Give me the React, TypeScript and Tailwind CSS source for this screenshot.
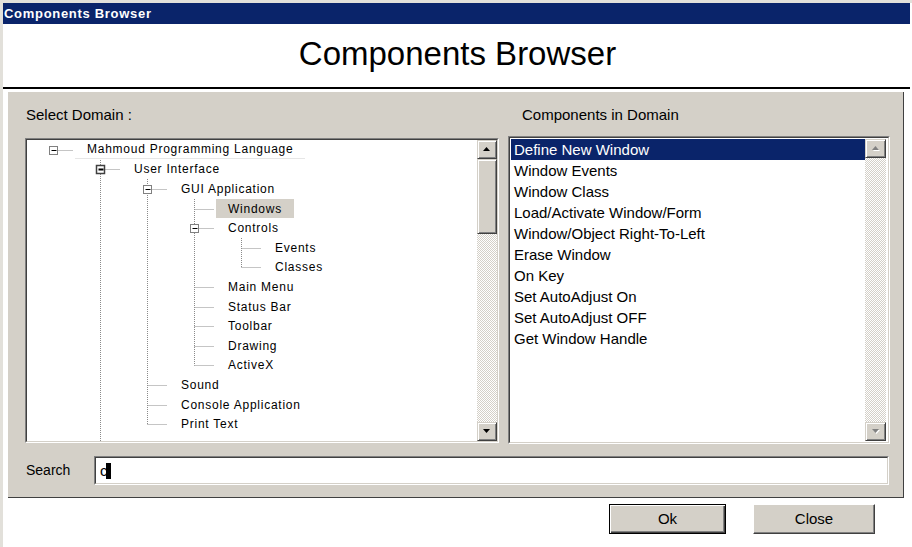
import React from 'react';

const treeRows = [
  { label: 'Mahmoud Programming Language', level: 0, box: true, underline: true },
  { label: 'User Interface', level: 1, box: true, strong: true },
  { label: 'GUI Application', level: 2, box: true },
  { label: 'Windows', level: 3, selected: true },
  { label: 'Controls', level: 3, box: true },
  { label: 'Events', level: 4 },
  { label: 'Classes', level: 4 },
  { label: 'Main Menu', level: 3 },
  { label: 'Status Bar', level: 3 },
  { label: 'Toolbar', level: 3 },
  { label: 'Drawing', level: 3 },
  { label: 'ActiveX', level: 3 },
  { label: 'Sound', level: 2 },
  { label: 'Console Application', level: 2 },
  { label: 'Print Text', level: 2 },
];

const components = [
  'Define New Window',
  'Window Events',
  'Window Class',
  'Load/Activate Window/Form',
  'Window/Object Right-To-Left',
  'Erase Window',
  'On Key',
  'Set AutoAdjust On',
  'Set AutoAdjust OFF',
  'Get Window Handle',
];

const indent: Record<number, string> = {
  0: 'ml-[48px]',
  1: 'ml-[95px]',
  2: 'ml-[142px]',
  3: 'ml-[189px]',
  4: 'ml-[236px]',
};

const ROW = 19.6;
const lineX = (level: number) => 26.5 + 47 * level;
const rowMid = (i: number) => Math.round(ROW * i + ROW / 2) + 0.5;

// vertical connectors: [level, first row, last row, runs to bottom]
const verticals: [number, number, number, boolean][] = [
  [1, 1, 14, true],
  [2, 2, 14, false],
  [3, 3, 11, false],
  [4, 5, 6, false],
];

function Arrow({ dir, disabled }: { dir: 'up' | 'down'; disabled?: boolean }) {
  const d = dir === 'up' ? 'M3.5 0L7 4H0z' : 'M0 0h7L3.5 4z';
  return (
    <svg width="8" height="5" viewBox="0 0 8 5">
      {disabled && <path d={d} fill="#ffffff" transform="translate(1 1)" />}
      <path d={d} fill={disabled ? '#808080' : '#000000'} />
    </svg>
  );
}

function ScrollBtn({ dir, disabled }: { dir: 'up' | 'down'; disabled?: boolean }) {
  return (
    <div className="h-[19px] shrink-0 bg-[#d4d0c8] border border-t-[#d4d0c8] border-l-[#d4d0c8] border-b-[#404040] border-r-[#404040] shadow-[inset_1px_1px_0_#ffffff,inset_-1px_-1px_0_#808080] flex items-center justify-center">
      <Arrow dir={dir} disabled={disabled} />
    </div>
  );
}

function TreeLines() {
  return (
    <svg className="absolute inset-0 pointer-events-none" width="450" height="301">
      <g stroke="#8a8a8a" strokeWidth="1" strokeDasharray="1 1" fill="none">
        {verticals.map(([lvl, from, to, open]) => (
          <line
            key={lvl}
            x1={lineX(lvl)}
            x2={lineX(lvl)}
            y1={Math.round(ROW * from)}
            y2={open ? 301 : rowMid(to)}
          />
        ))}
        {treeRows.map((r, i) => (
          <line key={i} x1={lineX(r.level)} x2={lineX(r.level) + 20} y1={rowMid(i)} y2={rowMid(i)} />
        ))}
      </g>
      {treeRows.map((r, i) =>
        r.box ? (
          <g key={i}>
            <rect
              x={lineX(r.level) - 4}
              y={rowMid(i) - 4}
              width="8"
              height="8"
              fill="#ffffff"
              stroke={r.strong ? '#404040' : '#808080'}
              strokeWidth={r.strong ? 1.5 : 1}
            />
            <line
              x1={lineX(r.level) - 2}
              x2={lineX(r.level) + 3}
              y1={rowMid(i)}
              y2={rowMid(i)}
              stroke="#000000"
              strokeWidth={r.strong ? 2 : 1}
            />
          </g>
        ) : null
      )}
    </svg>
  );
}

export default function App() {
  return (
    <div className="w-[912px] h-[547px] bg-white border-l-[3px] border-t-[3px] border-[#e2e0da] flex flex-col overflow-hidden font-['Liberation_Sans',Arial,sans-serif] text-black">
      {/* window title bar */}
      <div className="h-[21px] mr-[2px] bg-[#0a246a] flex items-center pl-[1px] shrink-0">
        <span className="text-white font-bold text-[13px] tracking-[0.7px] leading-none">Components Browser</span>
      </div>

      <div className="h-[63px] flex items-center justify-center pb-[4px] shrink-0">
        <h1 className="text-[33px] leading-none">Components Browser</h1>
      </div>
      <div className="h-[2px] mr-[2px] bg-black shrink-0" />

      <div className="mt-[3px] ml-[5px] w-[896px] h-[406px] bg-[#d4d0c8] border-r border-b border-[#404040] shrink-0 flex flex-col">
        <div className="flex">
          {/* domain tree */}
          <div className="ml-[17px] w-[474px] flex flex-col">
            <div className="h-[46px] pt-[14px] pl-[1px] text-[15px] leading-[17px]">Select Domain :</div>
            <div className="h-[305px] border border-t-[#808080] border-l-[#808080] border-b-white border-r-white">
              <div className="h-full border border-t-[#404040] border-l-[#404040] border-b-[#d4d0c8] border-r-[#d4d0c8] bg-white flex">
                <div className="relative flex-1 overflow-hidden">
                  <TreeLines />
                  <div className="relative flex flex-col">
                    {treeRows.map((r) => (
                      <div key={r.label} className="h-[19.6px] flex items-center">
                        <span
                          className={`${indent[r.level]} h-[19px] px-[12px] flex items-center text-[12px] tracking-[0.75px] whitespace-nowrap ${
                            r.selected ? 'bg-[#d4d0c8]' : ''
                          } ${r.underline ? 'border-b border-[#e6e6e6]' : ''}`}
                        >
                          {r.label}
                        </span>
                      </div>
                    ))}
                  </div>
                </div>
                <div className="w-[20px] flex flex-col">
                  <ScrollBtn dir="up" />
                  <div className="h-[75px] shrink-0 bg-[#d4d0c8] border border-t-[#d4d0c8] border-l-[#d4d0c8] border-b-[#404040] border-r-[#404040] shadow-[inset_1px_1px_0_#ffffff,inset_-1px_-1px_0_#808080]" />
                  <div className="flex-1 bg-[image:repeating-conic-gradient(#d4d0c8_0%_25%,#ffffff_0%_50%)] bg-[length:2px_2px]" />
                  <ScrollBtn dir="down" />
                </div>
              </div>
            </div>
          </div>

          {/* components list */}
          <div className="ml-[9px] w-[382px] flex flex-col">
            <div className="h-[44px] pt-[14px] pl-[14px] text-[15px] leading-[17px]">Components in Domain</div>
            <div className="h-[308px] border border-t-[#808080] border-l-[#808080] border-b-white border-r-white">
              <div className="h-full border border-t-[#404040] border-l-[#404040] border-b-[#d4d0c8] border-r-[#d4d0c8] bg-white flex">
                <div className="flex-1 ml-[1px] pt-[1px] flex flex-col">
                  {components.map((c, i) => (
                    <div
                      key={c}
                      className={`h-[21px] pl-[3px] text-[15px] leading-[21px] whitespace-nowrap ${
                        i === 0 ? 'bg-[#0a246a] text-white' : ''
                      }`}
                    >
                      {c}
                    </div>
                  ))}
                </div>
                <div className="w-[21px] my-[1px] mr-[2px] flex flex-col bg-[image:repeating-conic-gradient(#d4d0c8_0%_25%,#ffffff_0%_50%)] bg-[length:2px_2px]">
                  <ScrollBtn dir="up" disabled />
                  <div className="flex-1" />
                  <ScrollBtn dir="down" disabled />
                </div>
              </div>
            </div>
          </div>
        </div>

        {/* search */}
        <div className="mt-[12px] flex items-center">
          <div className="ml-[18px] w-[68px] text-[14px]">Search</div>
          <div className="w-[795px] h-[29px] border border-t-[#808080] border-l-[#808080] border-b-white border-r-white">
            <div className="h-full border border-t-[#404040] border-l-[#404040] border-b-[#d4d0c8] border-r-[#d4d0c8] bg-white flex items-center pl-[4px]">
              <span className="text-[15px] leading-none">c</span>
              <span className="-ml-[2px] w-[5px] h-[16px] bg-black" />
            </div>
          </div>
        </div>
      </div>

      {/* dialog buttons */}
      <div className="mt-[6px] flex justify-end pr-[37px] gap-[27px]">
        <button className="w-[117px] h-[30px] border border-black bg-[#d4d0c8] shadow-[inset_1px_1px_0_#ffffff,inset_-1px_-1px_0_#404040,inset_-2px_-2px_0_#808080] text-[15px]">
          Ok
        </button>
        <button className="w-[122px] h-[30px] bg-[#d4d0c8] border border-t-white border-l-white border-b-[#404040] border-r-[#404040] shadow-[inset_-1px_-1px_0_#808080] text-[15px]">
          Close
        </button>
      </div>
    </div>
  );
}
